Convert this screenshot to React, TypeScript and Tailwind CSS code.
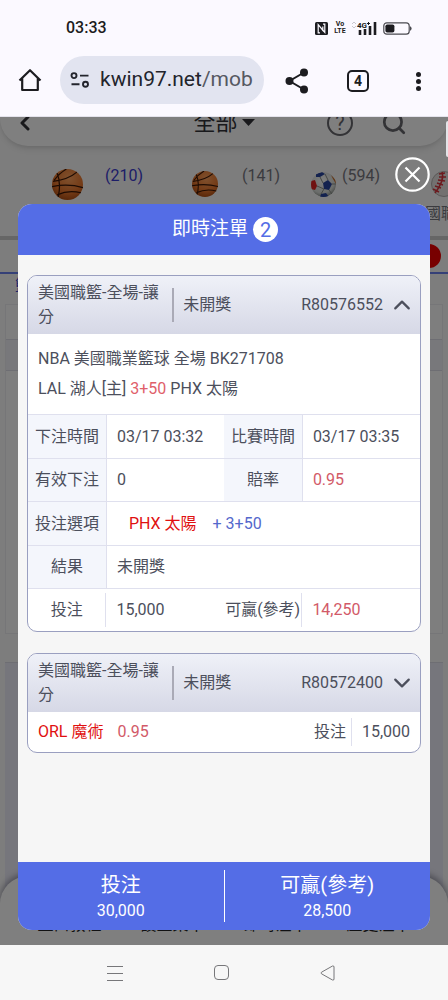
import * as React from 'react'
import { ChevronDown, ChevronLeft, ChevronUp, Search } from 'lucide-react'
import { clsx } from 'clsx'

interface Bet {
  id: string
  category: string
  status: string
}

const BETS: Bet[] = [
  { id: 'R80576552', category: '美國職籃-全場-讓分', status: '未開獎' },
  { id: 'R80572400', category: '美國職籃-全場-讓分', status: '未開獎' }
]

const FOOTER_LINKS = ['盤口教程', '設置菜單', '即時注單', '歷史注單']

/* ---------- Icons ---------- */

function NfcIcon() {
  return (
    <svg width="13" height="13" viewBox="0 0 13 13" aria-hidden="true">
      <rect width="13" height="13" rx="1.5" fill="#1c1c20" />
      <path d="M5 10.8H3.200V2.600L7.800 8.200V4.600" fill="none" stroke="#fbf9ff" strokeWidth="1.200" />
      <path d="M8 2.200H9.800V10.400L7.800 8.200" fill="none" stroke="#fbf9ff" strokeWidth="1.200" />
    </svg>
  )
}

function SignalIcon() {
  return (
    <svg width="25" height="15" viewBox="0 0 25 15" aria-hidden="true">
      <path d="M0 3L2 1L4 3M0 5L2 7L4 5" fill="none" stroke="#c9c8d0" strokeWidth="1" />
      <text x="5" y="7" fontSize="8" fontWeight="700" fontFamily="Roboto, sans-serif" fill="#1c1c20">4G</text>
      <path d="M15 2.5h3M16.5 1v3" stroke="#1c1c20" strokeWidth="1" />
      <path d="M8 9v5M13 8v6M18 5v9M23 1v13" stroke="#1c1c20" strokeWidth="2.6" />
    </svg>
  )
}

function BatteryIcon() {
  return (
    <svg width="29" height="13" viewBox="0 0 29 13" aria-hidden="true">
      <rect x="0.8" y="0.8" width="25.4" height="11.4" rx="3" fill="none" stroke="#4a4a50" strokeWidth="1.2" />
      <rect x="2.4" y="2.4" width="9" height="8.2" rx="1.8" fill="#1c1c20" />
      <path d="M27 4.2Q28.6 4.6 28.6 6.5Q28.6 8.4 27 8.8Z" fill="#4a4a50" />
    </svg>
  )
}

function HomeIcon() {
  return (
    <svg width="24" height="24" viewBox="0 0 24 24" fill="none" stroke="#1c1c20" strokeWidth="2.2" aria-hidden="true">
      <path d="M1.5 12.5L12 2.2L22.5 12.5M4.2 10.5V22H19.8V10.5" strokeLinejoin="round" />
    </svg>
  )
}

function SiteSettingsIcon() {
  return (
    <svg width="20" height="16" viewBox="0 0 20 16" fill="none" stroke="#23242c" strokeWidth="1.9" className="flex-shrink-0" aria-hidden="true">
      <circle cx="4" cy="3.6" r="2.5" />
      <path d="M10 3.6H18.5M1.5 12.2H9.5" />
      <circle cx="15.5" cy="12.2" r="2.5" />
    </svg>
  )
}

function ShareIcon() {
  return (
    <svg width="24" height="26" viewBox="0 0 24 26" aria-hidden="true">
      <path d="M19 4.5L4.5 13L19 21.5" fill="none" stroke="#1c1c20" strokeWidth="2" />
      <circle cx="19" cy="4.5" r="4" fill="#1c1c20" />
      <circle cx="4.5" cy="13" r="4" fill="#1c1c20" />
      <circle cx="19" cy="21.5" r="4" fill="#1c1c20" />
    </svg>
  )
}

function Basketball({ size }: { size: number }) {
  return (
    <svg width={size} height={size} viewBox="0 0 30 30" aria-hidden="true">
      <defs>
        <radialGradient id="orange-ball" cx="0.55" cy="0.3" r="0.75">
          <stop offset="0" stopColor="#ffa25c" />
          <stop offset="0.6" stopColor="#e8772e" />
          <stop offset="1" stopColor="#a8480f" />
        </radialGradient>
      </defs>
      <circle cx="15" cy="15" r="15" fill="url(#orange-ball)" />
      <path
        d="M5 4Q9 14 6 27M1 12Q16 10 24 3M0 17Q16 14 30 18M5 25Q16 20 28 23M14 0Q7 4 2 11"
        fill="none"
        stroke="#3a1605"
        strokeWidth="1.2"
      />
    </svg>
  )
}

function SoccerBall() {
  return (
    <svg width="25" height="25" viewBox="0 0 25 25" aria-hidden="true">
      <defs>
        <clipPath id="soccer-clip"><circle cx="12.5" cy="12.5" r="12.5" /></clipPath>
        <radialGradient id="soccer-ball" cx="0.45" cy="0.35" r="0.7">
          <stop offset="0" stopColor="#ffffff" />
          <stop offset="0.7" stopColor="#d8dcd8" />
          <stop offset="1" stopColor="#7c827c" />
        </radialGradient>
      </defs>
      <g clipPath="url(#soccer-clip)">
        <circle cx="12.5" cy="12.5" r="12.5" fill="url(#soccer-ball)" />
        <path d="M12 11L17 8L21 12L18 18L13 17Z" fill="#28459e" />
        <path d="M5 2L11 0L14 2L9 5L5 5Z" fill="#28459e" />
        <path d="M0 9L4 8L6 14L4 18L0 17Z" fill="#e02222" />
        <path d="M10 22L15 21L18 25H9Z" fill="#28459e" />
        <path d="M20 3L25 8V12L22 7Z" fill="#c9702e" />
        <path d="M9 5L12 11M6 14L13 17M14 2L17 8M21 12L25 12M13 17L10 22M18 18L21 22" stroke="#8a8f8a" fill="none" />
      </g>
    </svg>
  )
}

function Baseball() {
  return (
    <svg width="26" height="26" viewBox="0 0 26 26" aria-hidden="true">
      <circle cx="13" cy="13" r="12.5" fill="#e6e2e0" stroke="#b5b1af" />
      <path d="M11 1Q14 9 4 22" fill="none" stroke="#d8343c" strokeWidth="1.5" />
      <path d="M8 3L14 2M8 6L15 6M7 9L14 10M6 12L12 14M4 15L10 17M2 18L8 21" stroke="#d8343c" strokeWidth="1.4" />
    </svg>
  )
}

/* ---------- Phone and browser bars ---------- */

function BrowserBar() {
  return (
    <header className="flex-shrink-0 bg-[#fbf9ff] border-b border-[#e4e3ec]">
      <div className="flex h-14 items-center justify-between pl-[66px] pr-9 text-[#1c1c20]">
        <span className="text-base font-medium">03:33</span>
        <div className="flex items-center gap-[6px]">
          <NfcIcon />
          <span className="w-3 text-center text-[7px] font-bold leading-[7px]">Vo<br />LTE</span>
          <SignalIcon />
          <BatteryIcon />
        </div>
      </div>
      <div className="flex h-[60px] items-start pl-[18px] pr-[19px]">
        <button type="button" aria-label="Home" className="mt-3 flex-shrink-0"><HomeIcon /></button>
        <div className="ml-[18px] flex h-12 min-w-0 flex-1 items-center gap-[10px] rounded-full bg-[#e2e4f0] px-[10px]">
          <SiteSettingsIcon />
          <span className="whitespace-nowrap text-[21px] text-[#23242c]">
            kwin97.net<span className="text-[#565862]">/mob</span>
          </span>
        </div>
        <div className="ml-[21px] mt-3 flex flex-shrink-0 items-center gap-[38px]">
          <button type="button" aria-label="Share"><ShareIcon /></button>
          <button
            type="button"
            aria-label="Tabs"
            className="flex h-[22px] w-[22px] items-center justify-center rounded-[5px] border-2 border-[#1c1c20] text-sm font-bold text-[#1c1c20]"
          >
            4
          </button>
          <button type="button" aria-label="More" className="flex w-[22px] flex-col items-center gap-[2px]">
            <i className="h-[5px] w-[5px] rounded-full bg-[#1c1c20]" />
            <i className="h-[5px] w-[5px] rounded-full bg-[#1c1c20]" />
            <i className="h-[5px] w-[5px] rounded-full bg-[#1c1c20]" />
          </button>
        </div>
      </div>
    </header>
  )
}

function SystemNav() {
  return (
    <nav className="flex h-[55px] flex-shrink-0 items-center justify-center gap-[91px] bg-[#f7f7f7] pr-[5px] text-[#77777a]">
      <button type="button" aria-label="Recent apps">
        <svg width="16" height="16" viewBox="0 0 16 16" stroke="currentColor" aria-hidden="true">
          <path d="M0 1.5H16M0 8.5H16M0 15.5H16" />
        </svg>
      </button>
      <button type="button" aria-label="Home screen" className="h-[15px] w-[15px] rounded-[4px] border border-[#77777a]" />
      <button type="button" aria-label="Back">
        <svg width="16" height="16" viewBox="0 0 16 16" fill="none" stroke="currentColor" strokeLinejoin="round" aria-hidden="true">
          <path d="M1.5 7.2Q0.5 8 1.5 8.8L12.5 15Q14 15.5 14 14V2Q14 0.5 12.5 1Z" />
        </svg>
      </button>
    </nav>
  )
}

/* ---------- Page behind the dialog ---------- */

interface SportTabProps {
  label: string
  count?: string
  active?: boolean
  className: string
  icon: React.ReactNode
}

function SportTab({ label, count, active, className, icon }: SportTabProps) {
  return (
    <button type="button" className={clsx('flex-shrink-0 text-left', active ? 'text-[#3a3ad0]' : 'text-[#77777f]', className)}>
      <span className="flex h-9 items-center">
        {icon}
        {count && <span className="mb-4 ml-auto w-[38px]">{count}</span>}
      </span>
      <span className="block whitespace-nowrap leading-6">{label}</span>
    </button>
  )
}

function SportsPage() {
  return (
    <div className="flex h-full flex-col bg-[#fafafa]">
      <div className="-mt-[30px] flex h-[59px] flex-shrink-0 items-center rounded-b-[28px] bg-white pl-[13px] pr-[41px] pt-3 text-[#333338] shadow-md">
        <ChevronLeft size={24} strokeWidth={3} />
        <span className="ml-auto mr-auto flex items-center gap-1 pl-[84px] text-[22px]">
          全部
          <svg width="13" height="7" viewBox="0 0 13 7" aria-hidden="true"><path d="M0 0H13L6.5 7Z" fill="currentColor" /></svg>
        </span>
        <span className="mr-7 flex h-[26px] w-[26px] items-center justify-center rounded-full border-2 border-[#66666c] text-xl text-[#66666c]">?</span>
        <Search size={26} strokeWidth={2.5} color="#66666c" />
      </div>
      <div className="flex h-[90px] flex-shrink-0 items-start overflow-hidden pl-[52px] pt-5">
        <SportTab className="w-[91px] mr-[49px]" label="美國職籃" count="(210)" active icon={<Basketball size={31} />} />
        <SportTab className="w-[88px] mr-[31px]" label="其他籃球" count="(141)" icon={<Basketball size={26} />} />
        <SportTab className="w-[69px] mr-[29px]" label="足球" count="(594)" icon={<SoccerBall />} />
        <SportTab className="w-16" label="美國職棒" icon={<span className="ml-[22px]"><Baseball /></span>} />
      </div>
      <div className="flex h-[38px] flex-shrink-0 items-center justify-end border-b-2 border-t-4 border-b-[#6a80ee] border-t-[#cccccc] bg-[#fafafa] pr-[7px]">
        <span className="h-6 w-6 rounded-full bg-[#f00000]" />
      </div>
      <div className="h-[30px] flex-shrink-0 pl-[15px] text-base text-[#3a4ad0]">籃球</div>
      <div className="mx-[5px] h-[330px] flex-shrink-0 border border-[#ececf0] bg-[#fdfdfd]">
        <div className="h-[34px]" />
        <div className="h-8 border-y border-[#dcdde6] bg-[#f0f1f6]" />
      </div>
      <div className="mx-[5px] mt-7 flex-1 border-t border-[#dcdde6] bg-[#ececf8]" />
      <div className="-mt-6 flex h-[69px] flex-shrink-0 items-end rounded-t-[28px] bg-white px-[18px] pb-2 text-[#222226] shadow-[0_-3px_6px_#9a9aa8]">
        {FOOTER_LINKS.map(link => (
          <a key={link} href="#" className="flex-1 text-center text-base">{link}</a>
        ))}
      </div>
    </div>
  )
}

/* ---------- Bet slip dialog ---------- */

interface BetCardProps {
  bet: Bet
  open?: boolean
  children: React.ReactNode
}

function BetCard({ bet, open = false, children }: BetCardProps) {
  return (
    <section className="overflow-hidden rounded-[10px] border border-[#9a9fc0] bg-white">
      <button
        type="button"
        aria-expanded={open}
        className="flex w-full items-center bg-gradient-to-b from-[#eff1f8] to-[#d6d8e6] py-[5px] pl-[10px] pr-[9px] text-left"
      >
        <span className="w-[36%] leading-6">{bet.category}</span>
        <span className="mr-[9px] h-[34px] w-[2px] bg-[#aaaab6]" />
        <span>{bet.status}</span>
        <span className="ml-auto mr-[10px]">{bet.id}</span>
        {open ? <ChevronUp size={18} viewBox="4 4 16 16" /> : <ChevronDown size={18} viewBox="4 4 16 16" />}
      </button>
      {children}
    </section>
  )
}

function Label({ children }: { children: React.ReactNode }) {
  return <th scope="row" className="whitespace-nowrap border-r border-[#dfe0ee] bg-[#f4f6fc] text-center font-normal">{children}</th>
}

function Value({ children, colSpan, className }: { children: React.ReactNode; colSpan?: number; className?: string }) {
  return <td colSpan={colSpan} className={clsx('pl-[10px]', className)}>{children}</td>
}

function BetDetails() {
  return (
    <table className="w-full table-fixed border-collapse">
      <colgroup>
        <col className="w-[20%]" />
        <col className="w-[30%]" />
        <col className="w-[20%]" />
        <col className="w-[30%]" />
      </colgroup>
      <tbody>
        <tr className="h-11 border-t border-[#dfe0ee]">
          <Label>下注時間</Label>
          <Value>03/17 03:32</Value>
          <Label>比賽時間</Label>
          <Value>03/17 03:35</Value>
        </tr>
        <tr className="h-[43px] border-t border-[#dfe0ee]">
          <Label>有效下注</Label>
          <Value>0</Value>
          <Label>賠率</Label>
          <Value className="text-[#d25a68]">0.95</Value>
        </tr>
        <tr className="h-11 border-t border-[#dfe0ee]">
          <Label>投注選項</Label>
          <Value colSpan={3}>
            <span className="ml-3 text-[#e01010]">PHX 太陽</span>
            <span className="ml-4 text-[#5468cc]">+ 3+50</span>
          </Value>
        </tr>
        <tr className="h-[43px] border-t border-[#dfe0ee]">
          <Label>結果</Label>
          <Value colSpan={3}>未開獎</Value>
        </tr>
        <tr className="h-[42px] border-t border-[#dfe0ee]">
          <th scope="row" className="p-0 font-normal"><div className="border-r border-[#dfe0ee] leading-[34px]">投注</div></th>
          <Value>15,000</Value>
          <th scope="row" className="whitespace-nowrap p-0 font-normal"><div className="border-r border-[#dfe0ee] leading-[34px]">可贏(參考)</div></th>
          <Value className="text-[#d25a68]">14,250</Value>
        </tr>
      </tbody>
    </table>
  )
}

function BetSlipDialog() {
  return (
    <div className="absolute inset-0 flex flex-col bg-black/50 px-[18px] pb-[15px] pt-10">
      <button type="button" aria-label="Close" className="mb-3 self-end text-white">
        <svg width="35" height="35" viewBox="0 0 35 35" fill="none" stroke="currentColor" strokeWidth="2.2" aria-hidden="true">
          <circle cx="17.5" cy="17.5" r="16.2" />
          <path d="M10.5 10.5L24.5 24.5M24.5 10.5L10.5 24.5" />
        </svg>
      </button>
      <div role="dialog" aria-label="即時注單" className="flex flex-1 flex-col overflow-hidden rounded-[14px] bg-[#f6f6f6]">
        <h1 className="flex h-[51px] flex-shrink-0 items-center justify-center gap-[5px] bg-[#546de6] pl-[2px] text-[19px] text-white">
          即時注單
          <span className="flex h-[25px] w-[25px] items-center justify-center rounded-full bg-white text-xl text-[#546de6]">2</span>
        </h1>
        <div className="flex flex-1 flex-col gap-[21px] px-[9px] pt-5 text-base text-[#4c4f5c]">
          <BetCard bet={BETS[0]} open>
            <div className="px-[10px] py-[10px] leading-[30px]">
              <p>NBA 美國職業籃球 全場 BK271708</p>
              <p>LAL 湖人[主] <span className="text-[#e0606a]">3+50</span> PHX 太陽</p>
            </div>
            <BetDetails />
          </BetCard>
          <BetCard bet={BETS[1]}>
            <div className="flex h-10 items-center px-[10px]">
              <span className="text-[#e01010]">ORL 魔術</span>
              <span className="ml-[14px] text-[#d25a68]">0.95</span>
              <span className="ml-auto border-r border-[#dfe0ee] pr-[5px] leading-7">投注</span>
              <span className="pl-[10px]">15,000</span>
            </div>
          </BetCard>
        </div>
        <dl className="flex h-[68px] flex-shrink-0 items-center bg-[#546de6] text-center text-white">
          <div className="flex-1 border-r border-white">
            <dt className="text-xl leading-[30px]">投注</dt>
            <dd className="text-base leading-[22px]">30,000</dd>
          </div>
          <div className="flex-1">
            <dt className="text-xl leading-[30px]">可贏(參考)</dt>
            <dd className="text-base leading-[22px]">28,500</dd>
          </div>
        </dl>
      </div>
    </div>
  )
}

export default function App() {
  return (
    <div className="flex h-screen min-h-[1000px] flex-col font-['Roboto','Noto_Sans_CJK_TC',sans-serif]">
      <BrowserBar />
      <main className="relative min-h-0 flex-1 overflow-hidden">
        <SportsPage />
        <BetSlipDialog />
        {/* scroll thumb */}
        <div className="absolute right-0 top-1 h-9 w-[2px] rounded-l bg-[#e4e4e8]" />
      </main>
      <SystemNav />
    </div>
  )
}
